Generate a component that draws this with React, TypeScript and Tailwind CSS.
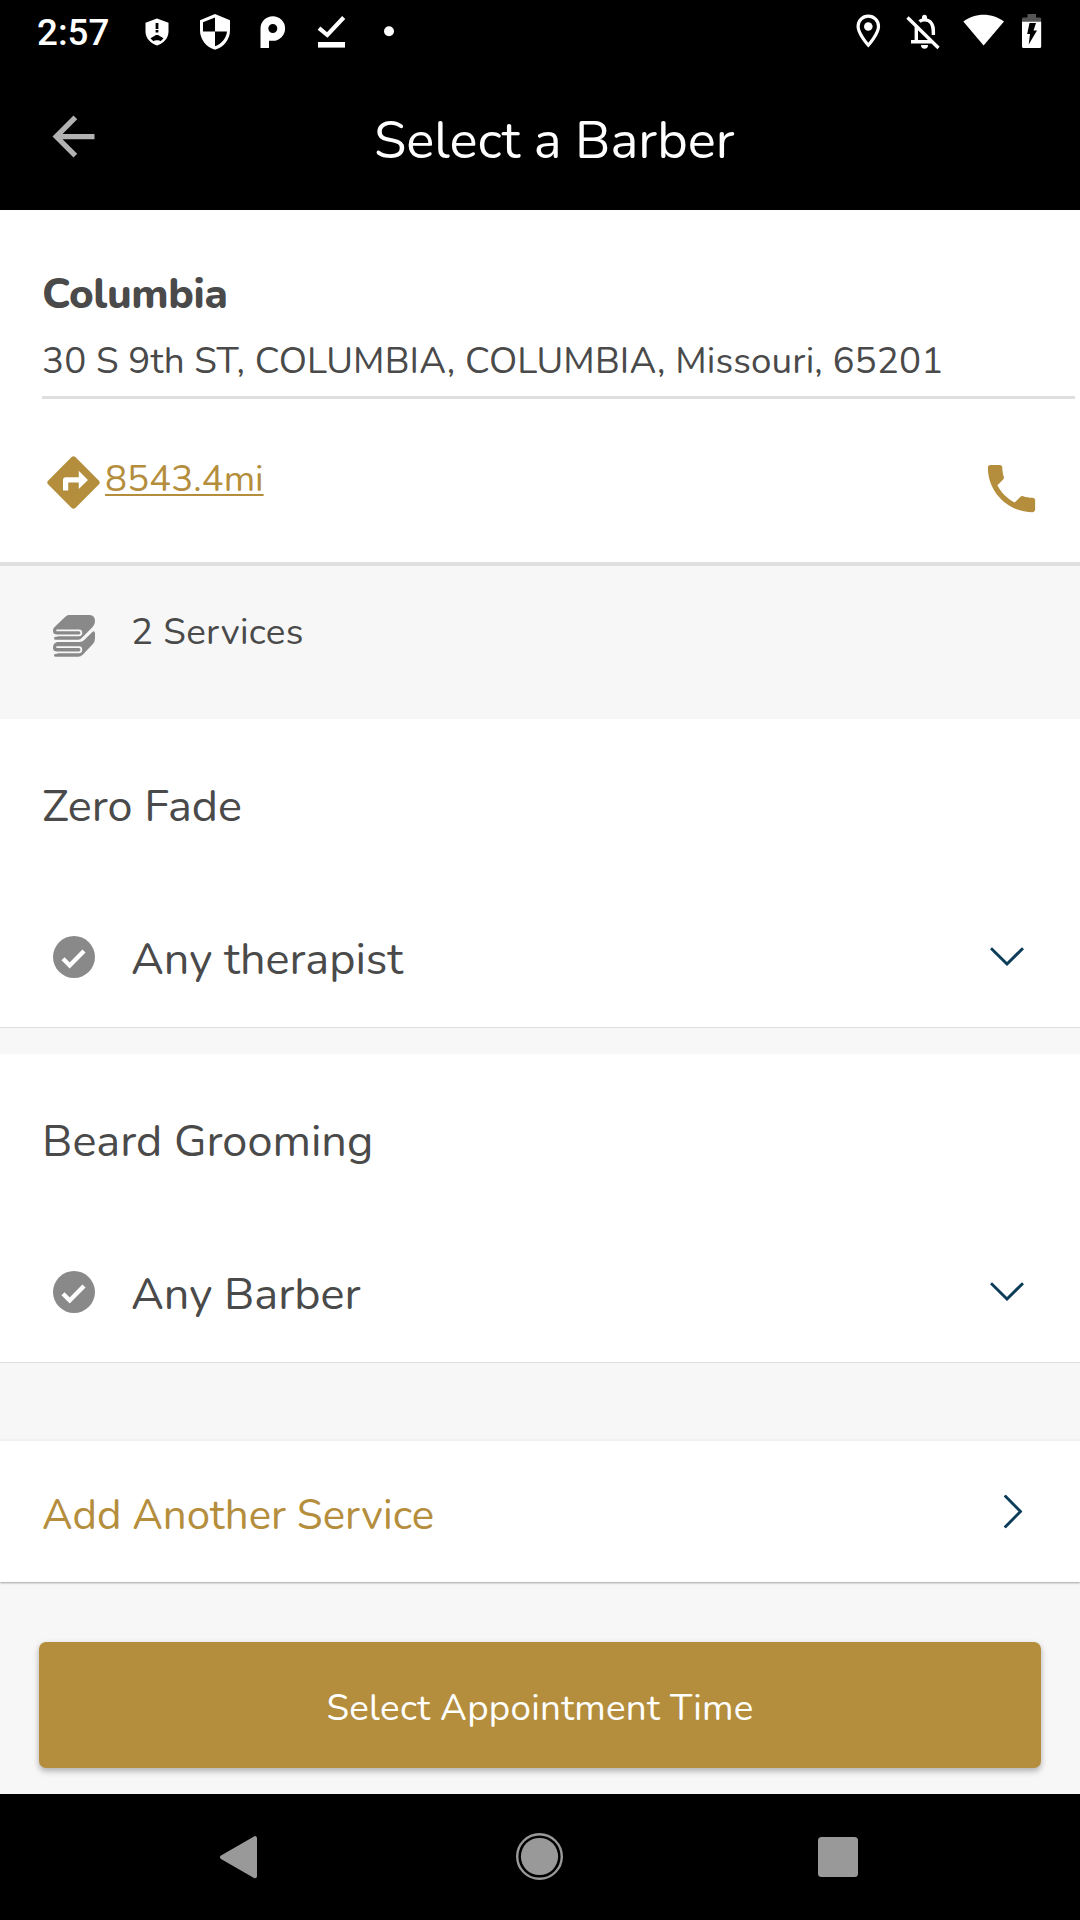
import { clsx } from "clsx";

const services = [
    { name: "Zero Fade", staff: "Any therapist" },
    { name: "Beard Grooming", staff: "Any Barber" },
];

function StatusIcons() {
    return (
        <svg width="260" height="63" viewBox="140 0 260 63" fill="#fff">
            {/* alert shield */}
            <path d="M157 18.5l11.5 4.3v8.7c0 6.4-4.6 11.7-11.5 14-6.9-2.3-11.5-7.6-11.5-14v-8.7z" />
            <path d="M155.6 23h2.8v6h-2.8zM155.6 30h2.8v2.4h-2.8z" fill="#000" />
            <path d="M150.5 38.5c1.5-1.6 3.5-1.8 4.5-3 1.2-.6 2.8-.6 4 0 1 1.2 3 1.4 4.5 3l-3 2.7c-1.2-1.3-5.5-1.3-7 0z" fill="#000" />
            {/* quartered shield */}
            <path d="M215 14l15 6.3v10.2c0 8.8-6.2 16.8-15 19.3-8.8-2.5-15-10.5-15-19.3V20.3z" />
            <path d="M215 17.5V31.5H203V22.3zM215 31.5h12c-.7 6.7-5.5 12.5-12 14.8z" fill="#000" />
            {/* parking logo */}
            <path fillRule="evenodd" d="M260.5 48V28.5a12.3 12.3 0 1 1 12.3 12.3h-3.8V48zM272.8 24a4.5 4.5 0 0 0 0 9 4.5 4.5 0 0 0 0-9z" />
            {/* download done */}
            <path d="M319 28.2l8.3 6.8L343.7 17.5" fill="none" stroke="#fff" strokeWidth="4.2" />
            <path d="M318 42h27v5.6h-27z" />
            <circle cx="389" cy="31.2" r="5" />
        </svg>
    );
}

function SystemIcons() {
    return (
        <svg width="200" height="63" viewBox="850 0 200 63" fill="#fff">
            {/* location */}
            <path d="M868.3 16.2c-5.8 0-10.2 4.5-10.2 10.3 0 7.3 10.2 18.7 10.2 18.7s10.2-11.4 10.2-18.7c0-5.8-4.4-10.3-10.2-10.3z" fill="none" stroke="#fff" strokeWidth="3.2" />
            <circle cx="868.3" cy="26.5" r="4.3" />
            {/* muted bell */}
            <g fill="none" stroke="#fff" strokeWidth="3.4">
                <path d="M907.5 17.5L938.5 48" />
                <path d="M916.3 27v14.5M911 41.7h20.5" />
                <path d="M919.5 21.5c2-1.8 8.5-3 11.5 1.2 2.2 2.8 2.4 5 2.4 12.3" />
            </g>
            <path d="M922 19v-1.8a2.5 2.5 0 0 1 5 0V19zM921 45h7a3.5 3.8 0 0 1-7 0z" />
            {/* wifi */}
            <path d="M963.3 21.6C974.5 12.4 992.7 12.4 1004 21.6L983.6 45.6z" />
            {/* charging battery */}
            <path d="M1022 22v-3c0-.9.6-1.5 1.5-1.5h4V14h8.5v3.5h3.7c.9 0 1.5.6 1.5 1.5v3z" fill="#555" />
            <path d="M1022 21.8h19.2v24.7c0 .9-.6 1.5-1.5 1.5h-16.2c-.9 0-1.5-.6-1.5-1.5z" />
            <path d="M1029.5 23h6.5l-2.5 7.5h3.5l-8.3 14 1.3-10.5h-2.8z" fill="#000" />
        </svg>
    );
}

function TowelsIcon() {
    return (
        <svg className="size-[42px]" viewBox="158 554 126 126">
            <path d="M205 554H268Q284 556 284 572Q284 583 277 590L245 622Q240 628 234 628H166Q161 628 161 623.5T166 619H172L168 613Q158 611 158 601Q158 594 163 590L195 559Q200 554 205 554Z" fill="#898989" />
            <path d="M284 608V624Q284 635 277 642L247 673Q241 679 234 679H166Q161 679 161 674.5T166 670H172L168 664Q158 662 158 652Q158 643 163 639L170 635H238Q246 635 251 630L276 605Q282 600 284 608Z" fill="#898989" />
            <g fill="none" stroke="#f7f7f7" strokeWidth="5.5">
                <path d="M168 600H236Q243 600 243 607.5T236 615H158" />
                <path d="M168 650.5H236Q243 650.5 243 658T236 666H158" />
            </g>
        </svg>
    );
}

function CheckIcon() {
    return (
        <svg className="size-[42px]" viewBox="0 0 42 42">
            <circle cx="21" cy="21" r="21" fill="#898989" />
            <path d="M10 22.8l6.7 6.7L31 15" fill="none" stroke="#fff" strokeWidth="4.4" />
        </svg>
    );
}

function Chevron({ className }: { className?: string }) {
    return (
        <svg className={clsx("h-[19px] w-[34px]", className)} viewBox="0 0 34 19" fill="none" stroke="#0b3c5a" strokeWidth="2.9">
            <path d="M1 1.2L17 17l16-15.8" />
        </svg>
    );
}

function ServiceCard({ name, staff }: { name: string; staff: string }) {
    return (
        <section className="h-[309px] border-b border-[#dfdfdf] bg-white pt-[58px] pl-[42px] text-[45px] leading-[60px]">
            <h2>{name}</h2>
            <div className="mt-[93px] flex items-center">
                <div className="w-[89px] pb-[7px] pl-[10.5px]">
                    <CheckIcon />
                </div>
                <span>{staff}</span>
                <Chevron className="mr-[56px] mb-[7px] ml-auto" />
            </div>
        </section>
    );
}

export default function App() {
    return (
        <div className="flex h-[1920px] w-[1080px] flex-col overflow-hidden bg-[#f7f7f7] font-['Nunito','Lato',sans-serif] text-[#4a4a4a]">
            {/* status bar */}
            <div className="flex h-[63px] shrink-0 items-center bg-black pr-[30px] pl-[37px]">
                <span className="w-[103px] pt-[3px] font-[Roboto,sans-serif] text-[36.75px] leading-[64px] font-medium text-white">2:57</span>
                <StatusIcons />
                <div className="ml-auto">
                    <SystemIcons />
                </div>
            </div>

            <header className="flex h-[147px] shrink-0 items-center bg-black pl-[42px] text-white">
                <svg className="size-[63px]" viewBox="0 0 24 24" fill="#b2b2b2">
                    <path d="M20 11H7.83l5.59-5.59L12 4l-8 8 8 8 1.41-1.41L7.83 13H20v-2z" />
                </svg>
                <h1 className="ml-[269px] pt-[8px] text-[52.5px] leading-[72px]">Select a Barber</h1>
            </header>

            {/* shop details */}
            <section className="h-[356px] shrink-0 border-b-4 border-[#dfdfdf] bg-white pt-[55px] pl-[42px]">
                <h2 className="text-[42px] leading-[60px] font-extrabold tracking-[-0.35px]">Columbia</h2>
                <p className="mt-[11px] text-[36.75px] leading-[50px] tracking-[0.13px]">30 S 9th ST, COLUMBIA, COLUMBIA, Missouri, 65201</p>
                <div className="mt-[10px] mr-[5px] h-[3px] bg-[#dfdfdf]" />
                <div className="flex pr-[37px] text-[#b48e3c]">
                    <svg className="mt-[52px] size-[63px]" viewBox="0 0 24 24" fill="currentColor">
                        <path d="M21.71 11.29l-9-9c-.39-.39-1.02-.39-1.41 0l-9 9c-.39.39-.39 1.02 0 1.41l9 9c.39.39 1.02.39 1.41 0l9-9c.39-.38.39-1.01 0-1.41zM14 14.5V12h-4v3H8v-4c0-.55.45-1 1-1h5V7.5l3.5 3.5-3.5 3.5z" />
                    </svg>
                    <a className="mt-[55px] text-[36.75px] leading-[50px] underline decoration-[2px] underline-offset-[3px] [text-decoration-skip-ink:none]">8543.4mi</a>
                    <svg className="mt-[58px] ml-auto size-[63px]" viewBox="0 0 24 24" fill="currentColor">
                        <path d="M6.62 10.79c1.44 2.83 3.76 5.14 6.59 6.59l2.2-2.2c.27-.27.67-.36 1.02-.24 1.12.37 2.33.57 3.57.57.55 0 1 .45 1 1V20c0 .55-.45 1-1 1-9.39 0-17-7.61-17-17 0-.55.45-1 1-1h3.5c.55 0 1 .45 1 1 0 1.25.2 2.45.57 3.57.11.35.03.74-.25 1.02l-2.2 2.2z" />
                    </svg>
                </div>
            </section>

            <div className="flex h-[153px] shrink-0 pt-[41px] pl-[52.5px]">
                <div className="w-[78.5px] pt-[8px]">
                    <TowelsIcon />
                </div>
                <span className="text-[36.75px] leading-[50px] tracking-[0.35px]">2 Services</span>
            </div>

            <div className="flex shrink-0 flex-col gap-[26px]">
                {services.map((s) => (
                    <ServiceCard key={s.name} name={s.name} staff={s.staff} />
                ))}
            </div>

            <button className="mt-[77px] flex h-[142px] shrink-0 items-center border-t border-[#f0f0f0] bg-white pt-[9px] pr-[50px] pl-[42px] text-[42px] leading-[60px] text-[#b48e3c] shadow-[0_1px_2px_rgba(0,0,0,0.35)]">
                Add Another Service
                <Chevron className="mb-[9px] ml-auto -rotate-90" />
            </button>

            <button className="mx-[39px] mt-[60px] h-[126px] shrink-0 rounded-[7px] bg-[#b48e3c] pt-[5px] text-[36.75px] leading-[50px] tracking-[0.27px] text-white shadow-[0_3px_6px_rgba(0,0,0,0.3)]">
                Select Appointment Time
            </button>

            {/* android navigation bar */}
            <nav className="mt-[26px] h-[126px] shrink-0 bg-black">
                <svg width="1080" height="126" viewBox="0 1794 1080 126" fill="#999">
                    <path d="M222 1857.2L255 1838.2V1876.2Z" stroke="#999" strokeWidth="4" strokeLinejoin="round" />
                    <circle cx="539.5" cy="1856.5" r="22.3" fill="none" stroke="#999" strokeWidth="2.4" />
                    <circle cx="539.5" cy="1856.5" r="18.6" />
                    <rect x="818" y="1837" width="40" height="40" rx="3.5" />
                </svg>
            </nav>
        </div>
    );
}
